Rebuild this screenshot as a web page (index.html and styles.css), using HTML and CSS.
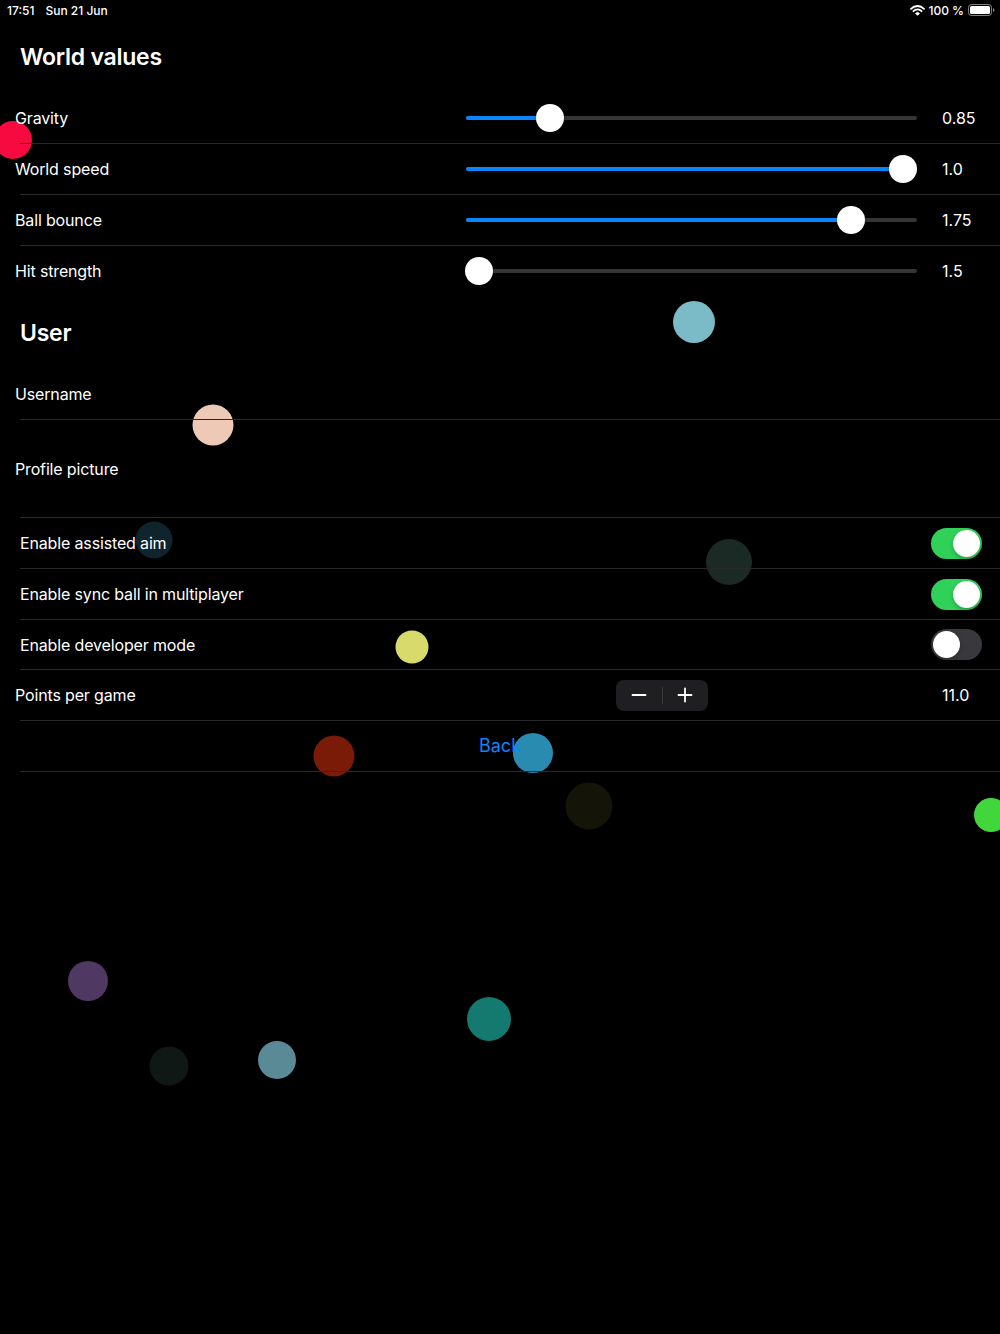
FILE: index.html
```html
<!DOCTYPE html>
<html lang="en">
<head>
<meta charset="utf-8">
<title>Settings</title>
<link rel="stylesheet" href="styles.css">
</head>
<body>
<div class="screen">
  <div class="balls" aria-hidden="true">
    <span class="ball b1"></span><span class="ball b2"></span><span class="ball b3"></span>
    <span class="ball b4"></span><span class="ball b5"></span><span class="ball b6"></span>
    <span class="ball b7"></span><span class="ball b8"></span><span class="ball b9"></span>
    <span class="ball b10"></span><span class="ball b11"></span><span class="ball b12"></span>
    <span class="ball b13"></span><span class="ball b14"></span>
  </div>

  <div class="content">
    <div class="status">
      <div class="status-left"><span>17:51</span><span>Sun 21 Jun</span></div>
      <div class="status-right">
        <svg class="wifi" width="15" height="11" viewBox="0 0 15 11">
          <path d="M1 3.8 A9 9 0 0 1 14 3.8" fill="none" stroke="#fff" stroke-width="1.8" stroke-linecap="round"/>
          <path d="M3.4 6.2 A5.6 5.6 0 0 1 11.6 6.2" fill="none" stroke="#fff" stroke-width="1.8" stroke-linecap="round"/>
          <path d="M5.6 8.4 A2.6 2.6 0 0 1 9.4 8.4 L7.5 10.3 Z" fill="#fff" stroke="#fff" stroke-width="1" stroke-linejoin="round"/>
        </svg>
        <span class="battery-text">100 %</span>
        <svg class="battery" width="27" height="12" viewBox="0 0 27 12">
          <rect x="0.5" y="0.5" width="23" height="11" rx="3" fill="none" stroke="#fff" stroke-opacity="0.5"/>
          <rect x="2" y="2" width="20" height="8" rx="1.5" fill="#fff"/>
          <path d="M25 4 Q26.5 4.3 26.5 6 Q26.5 7.7 25 8 Z" fill="#fff" fill-opacity="0.5"/>
        </svg>
      </div>
    </div>

    <h2 class="section-title">World values</h2>

    <div class="row slider-row">
      <span class="label">Gravity</span>
      <div class="slider" style="--pos:84px"><div class="track"><div class="fill"></div></div><div class="thumb"></div></div>
      <span class="value">0.85</span>
    </div>
    <div class="row slider-row">
      <span class="label">World speed</span>
      <div class="slider" style="--pos:437px"><div class="track"><div class="fill"></div></div><div class="thumb"></div></div>
      <span class="value">1.0</span>
    </div>
    <div class="row slider-row">
      <span class="label">Ball bounce</span>
      <div class="slider" style="--pos:385px"><div class="track"><div class="fill"></div></div><div class="thumb"></div></div>
      <span class="value">1.75</span>
    </div>
    <div class="row slider-row last">
      <span class="label">Hit strength</span>
      <div class="slider" style="--pos:13px"><div class="track"><div class="fill"></div></div><div class="thumb"></div></div>
      <span class="value">1.5</span>
    </div>

    <h2 class="section-title">User</h2>

    <div class="row">
      <span class="label">Username</span>
    </div>
    <div class="row tall">
      <span class="label">Profile picture</span>
    </div>

    <div class="row toggle-row">
      <span class="label">Enable assisted aim</span>
      <span class="toggle on"><span class="knob"></span></span>
    </div>
    <div class="row toggle-row">
      <span class="label">Enable sync ball in multiplayer</span>
      <span class="toggle on"><span class="knob"></span></span>
    </div>
    <div class="row toggle-row short">
      <span class="label">Enable developer mode</span>
      <span class="toggle"><span class="knob"></span></span>
    </div>

    <div class="row stepper-row">
      <span class="label">Points per game</span>
      <div class="stepper">
        <span class="step">
          <svg width="16" height="16" viewBox="0 0 16 16"><path d="M1.5 8 H14.5" stroke="#fff" stroke-width="1.8" stroke-linecap="round"/></svg>
        </span>
        <span class="step-divider"></span>
        <span class="step">
          <svg width="16" height="16" viewBox="0 0 16 16"><path d="M1.5 8 H14.5 M8 1.5 V14.5" stroke="#fff" stroke-width="1.8" stroke-linecap="round"/></svg>
        </span>
      </div>
      <span class="value">11.0</span>
    </div>

    <div class="row back-row">
      <span class="back">Back</span>
    </div>
  </div>
</div>
</body>
</html>
```

FILE: styles.css
```css
* { box-sizing: border-box; }

html, body {
  margin: 0;
  padding: 0;
  background: #000;
}

body {
  font-family: "Inter", "Roboto", "Liberation Sans", sans-serif;
  color: #fff;
}

.screen {
  position: relative;
  width: 1000px;
  height: 1334px;
  overflow: hidden;
  background: #000;
}

/* Balls on the free canvas, behind content */
.balls {
  position: absolute;
  inset: 0;
  z-index: 0;
}

.ball {
  position: absolute;
  border-radius: 50%;
  transform: translate(-50%, -50%);
}

.b1  { left: 13px;  top: 140px;  width: 38px; height: 38px; background: #f70a40; }
.b2  { left: 694px; top: 322px;  width: 42px; height: 42px; background: #7bbac7; }
.b3  { left: 213px; top: 425px;  width: 41px; height: 41px; background: #eecab6; }
.b4  { left: 154px; top: 540px;  width: 37px; height: 37px; background: #10242d; }
.b5  { left: 729px; top: 562px;  width: 46px; height: 46px; background: #1b2a25; }
.b6  { left: 412px; top: 647px;  width: 33px; height: 33px; background: #d8db6a; }
.b7  { left: 334px; top: 756px;  width: 41px; height: 41px; background: #7a1b08; }
.b8  { left: 533px; top: 753px;  width: 40px; height: 40px; background: #2a8bb0; }
.b9  { left: 589px; top: 806px;  width: 47px; height: 47px; background: #141408; }
.b10 { left: 991px; top: 815px;  width: 34px; height: 34px; background: #41d63b; }
.b11 { left: 88px;  top: 981px;  width: 40px; height: 40px; background: #4f3862; }
.b12 { left: 169px; top: 1066px; width: 39px; height: 39px; background: #101816; }
.b13 { left: 277px; top: 1060px; width: 38px; height: 38px; background: #5a8a96; }
.b14 { left: 489px; top: 1019px; width: 44px; height: 44px; background: #147a70; }

.content {
  position: relative;
  z-index: 1;
}

/* Status bar */
.status {
  height: 20px;
  display: flex;
  align-items: center;
  justify-content: space-between;
  padding: 0 5px 0 7px;
  font-size: 12px;
  font-weight: 500;
}

.status-left {
  display: flex;
  gap: 11px;
}

.status-right {
  display: flex;
  align-items: center;
  gap: 3px;
}

.battery-text { margin-right: 1px; }

/* Section title */
.section-title {
  margin: 0;
  padding: 24px 20px 23px;
  font-size: 23px;
  line-height: 26px;
  font-weight: 600;
  letter-spacing: -0.25px;
}

/* Rows */
.row {
  position: relative;
  height: 51px;
  padding: 0 0 1px 15px;
  display: flex;
  align-items: center;
  font-size: 16px;
}

.row::after {
  content: "";
  position: absolute;
  left: 20px;
  right: 0;
  bottom: 0;
  height: 1px;
  background: #29292b;
}

.row.last {
  height: 50px;
  padding-bottom: 0;
}

.row.last::after { display: none; }

.row.tall { height: 98px; }

.row.short { height: 50px; }

.label {
  flex: 1 1 auto;
  white-space: nowrap;
  letter-spacing: -0.15px;
}

/* Slider */
.slider {
  position: relative;
  flex: 0 0 451px;
  height: 28px;
}

.track {
  position: absolute;
  left: 0;
  right: 0;
  top: 12px;
  height: 4px;
  border-radius: 2px;
  background: #353537;
}

.fill {
  position: absolute;
  left: 0;
  top: 0;
  bottom: 0;
  width: var(--pos);
  border-radius: 2px;
  background: #0a84ff;
}

.thumb {
  position: absolute;
  top: 0;
  left: calc(var(--pos) - 14px);
  width: 28px;
  height: 28px;
  border-radius: 50%;
  background: #fff;
  box-shadow: 0 1px 3px rgba(0, 0, 0, 0.3);
}

.value {
  flex: 0 0 58px;
  margin-left: 25px;
  white-space: nowrap;
}

/* Toggles */
.toggle-row {
  padding-left: 20px;
  padding-right: 18px;
}

.toggle {
  position: relative;
  flex: 0 0 51px;
  height: 31px;
  border-radius: 16px;
  background: #39393d;
}

.toggle.on { background: #30d158; }

.knob {
  position: absolute;
  top: 2px;
  left: 2px;
  width: 27px;
  height: 27px;
  border-radius: 50%;
  background: #fff;
  box-shadow: 0 2px 4px rgba(0, 0, 0, 0.25);
}

.toggle.on .knob { left: 22px; }

/* Stepper */
.stepper {
  flex: 0 0 92px;
  height: 31px;
  border-radius: 8px;
  background: #1f1f21;
  display: flex;
  align-items: center;
}

.step {
  flex: 1 1 0;
  display: flex;
  align-items: center;
  justify-content: center;
}

.step-divider {
  width: 1px;
  height: 17px;
  background: #3a3a3c;
}

.stepper-row .value {
  margin-left: 234px;
}

/* Back */
.back-row {
  justify-content: center;
  padding-left: 0;
}

.back {
  color: #0a84ff;
  font-size: 18px;
  margin-top: -2px;
}
```
